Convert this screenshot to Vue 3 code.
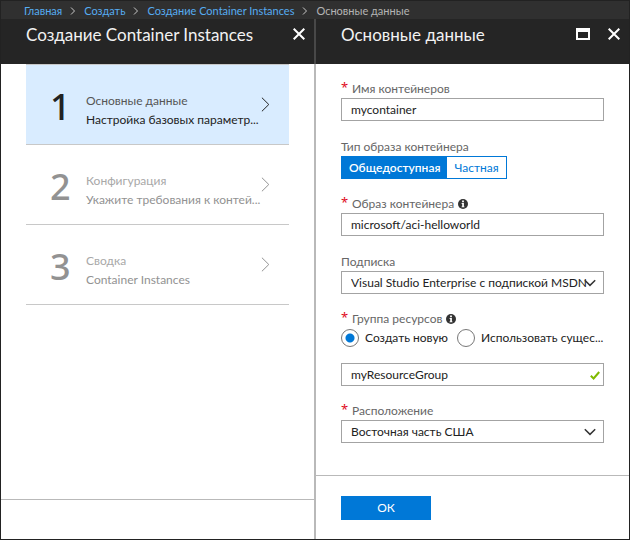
<script setup>
import { ref } from 'vue'

const crumbs = ['Главная', 'Создать', 'Создание Container Instances']
const steps = [
  { title: 'Основные данные', text: 'Настройка базовых параметр...' },
  { title: 'Конфигурация', text: 'Укажите требования к контей...' },
  { title: 'Сводка', text: 'Container Instances' }
]
const currentStep = ref(0)
const imageTypes = ['Общедоступная', 'Частная']
const imageType = ref('Общедоступная')
const name = ref('mycontainer')
const image = ref('microsoft/aci-helloworld')
const groupMode = ref('new')
const group = ref('myResourceGroup')
</script>

<template>
  <div class="portal">
    <nav class="crumbs" aria-label="Путь">
      <template v-for="crumb in crumbs" :key="crumb">
        <a href="#">{{ crumb }}</a>
        <svg class="sep" viewBox="0 0 6 8" aria-hidden="true"><path d="M1 .5 4.5 4 1 7.5" /></svg>
      </template>
      <span>Основные данные</span>
    </nav>

    <main class="blades">
      <section class="blade left">
        <header class="head">
          <h1>Создание Container Instances</h1>
          <button class="tool" type="button" aria-label="Закрыть">
            <svg viewBox="0 0 12 12"><path d="M.7.7 11.3 11.3M11.3.7.7 11.3" /></svg>
          </button>
        </header>
        <ol class="steps">
          <li v-for="(step, i) in steps" :key="step.title">
            <button class="step" :class="{ active: i === currentStep }" type="button" @click="currentStep = i">
              <span class="num">{{ i + 1 }}</span>
              <span class="copy">
                <span class="step-title">{{ step.title }}</span>
                <span class="step-text">{{ step.text }}</span>
              </span>
              <svg class="next" viewBox="0 0 9 15" aria-hidden="true"><path d="M.9.7 7.8 7.5.9 14.3" /></svg>
            </button>
          </li>
        </ol>
        <footer class="foot-empty"></footer>
      </section>

      <section class="blade right">
        <header class="head">
          <h2>Основные данные</h2>
          <button class="tool" type="button" aria-label="Развернуть">
            <svg class="max" viewBox="0 0 14 12"><path class="solid" d="M0 0h14v12H0zM2 4v6h10V4z" /></svg>
          </button>
          <button class="tool" type="button" aria-label="Закрыть">
            <svg viewBox="0 0 12 12"><path d="M.7.7 11.3 11.3M11.3.7.7 11.3" /></svg>
          </button>
        </header>

        <form class="form" @submit.prevent>
          <div class="field">
            <label class="label required" for="name">Имя контейнеров</label>
            <input id="name" v-model="name" class="box" type="text" />
          </div>

          <div class="field">
            <span id="type-label" class="label plain">Тип образа контейнера</span>
            <div class="toggle" role="group" aria-labelledby="type-label">
              <button
                v-for="type in imageTypes"
                :key="type"
                type="button"
                :class="{ on: type === imageType }"
                :aria-pressed="type === imageType"
                @click="imageType = type"
              >{{ type }}</button>
            </div>
          </div>

          <div class="field">
            <label class="label required" for="image">Образ контейнера
              <svg class="info" viewBox="0 0 10 10" aria-hidden="true"><circle cx="5" cy="5" r="5" /><path d="M4.1 1.6h1.8v1.6H4.1zM3.6 4.1h2.3v3.3h.6v.9h-3v-.9h.7V5h-.6z" /></svg>
            </label>
            <input id="image" v-model="image" class="box" type="text" />
          </div>

          <div class="field">
            <label class="label plain" for="subscription">Подписка</label>
            <div class="pick">
              <select id="subscription" class="box">
                <option>Visual Studio Enterprise с подпиской MSDN</option>
              </select>
              <svg class="down" viewBox="0 0 12 8" aria-hidden="true"><path d="M.8 1.2 6 6.4l5.2-5.2" /></svg>
            </div>
          </div>

          <div class="field">
            <label class="label required" for="group">Группа ресурсов
              <svg class="info" viewBox="0 0 10 10" aria-hidden="true"><circle cx="5" cy="5" r="5" /><path d="M4.1 1.6h1.8v1.6H4.1zM3.6 4.1h2.3v3.3h.6v.9h-3v-.9h.7V5h-.6z" /></svg>
            </label>
            <div class="radios">
              <label class="radio"><input v-model="groupMode" type="radio" name="mode" value="new" /><span>Создать новую</span></label>
              <label class="radio"><input v-model="groupMode" type="radio" name="mode" value="existing" /><span>Использовать сущес...</span></label>
            </div>
            <div class="pick">
              <input id="group" v-model="group" class="box" type="text" />
              <svg class="check" viewBox="0 0 10 9" aria-hidden="true"><path d="M.8 4.8 3.6 7.5 9.2 1" /></svg>
            </div>
          </div>

          <div class="field">
            <label class="label required" for="location">Расположение</label>
            <div class="pick">
              <select id="location" class="box">
                <option>Восточная часть США</option>
              </select>
              <svg class="down" viewBox="0 0 12 8" aria-hidden="true"><path d="M.8 1.2 6 6.4l5.2-5.2" /></svg>
            </div>
          </div>
        </form>

        <footer class="foot">
          <button class="ok" type="button">ОК</button>
        </footer>
      </section>
    </main>
  </div>
</template>

<style>
body {
  background: #fff;
}
</style>

<style scoped>
.portal,
.portal * {
  box-sizing: border-box;
}
.portal {
  display: flex;
  flex-direction: column;
  min-height: 100vh;
  border: 1px solid #222;
  font-family: Lato, "Noto Sans", sans-serif;
  font-size: 12px;
  line-height: 18px;
  color: #222;
}
button,
input,
select {
  margin: 0;
  font: inherit;
  color: inherit;
}
button {
  padding: 0;
  border: 0;
  background: none;
}
svg {
  display: block;
  flex: none;
  fill: none;
}
.crumbs {
  display: flex;
  align-items: center;
  height: 18px;
  padding: 2px 0 0 23px;
  gap: 8px;
  background: #303030;
  color: #b4b4b4;
  font-size: 11px;
  line-height: 16px;
  white-space: nowrap;
}
.crumbs a {
  color: #56acf2;
  text-decoration: none;
}
.sep {
  width: 6px;
  height: 8px;
  stroke: #c8c8c8;
}
.blades {
  display: flex;
  flex: 1;
}
.blade {
  display: flex;
  flex: 1;
  flex-direction: column;
  min-width: 0;
}
.left {
  padding-right: 2px;
  background: linear-gradient(#484848 45px, #b9b9b9 45px) right / 2px 100% no-repeat;
}
.head {
  display: flex;
  align-items: flex-start;
  gap: 18px;
  height: 45px;
  padding: 4px 9px 0 25px;
  background: #252525;
  color: #f2f2f2;
}
.head h1,
.head h2 {
  flex: 1;
  margin: 0;
  font-size: 17px;
  font-weight: 400;
  line-height: 24px;
  white-space: nowrap;
}
.tool {
  padding-top: 5px;
}
.tool svg {
  width: 12px;
  height: 12px;
  stroke: #fff;
  stroke-width: 2;
}
.tool .max {
  width: 14px;
}
.tool .solid {
  fill: #fff;
  fill-rule: evenodd;
  stroke: none;
}
.steps {
  flex: 1;
  margin: 0;
  padding: 0 25px;
  list-style: none;
}
.steps li {
  border-bottom: 1px solid #c8c8c8;
}
.steps li:first-child {
  border-top: 1px solid #c8c8c8;
}
.step {
  display: flex;
  align-items: center;
  width: 100%;
  height: 79px;
  padding: 4px 19px 0 24px;
  color: #929292;
  text-align: left;
}
.num {
  width: 36px;
  font-family: "Noto Sans", sans-serif;
  font-size: 36px;
  font-weight: 500;
  line-height: 40px;
}
.copy {
  flex: 1;
  min-width: 0;
  padding-top: 7px;
}
.copy span {
  display: block;
  line-height: 19px;
  white-space: nowrap;
}
.copy .step-title {
  color: #a8a8a8;
}
.active {
  background: #d9ecff;
  color: #222;
}
.active .step-title {
  color: #555;
}
.next {
  width: 9px;
  height: 15px;
  margin-bottom: 4px;
  stroke: currentColor;
}
.foot-empty {
  height: 40px;
  border-top: 1px solid #b9b9b9;
}
.form {
  display: flex;
  flex: 1;
  flex-direction: column;
  gap: 16px;
  padding: 16px 25px;
}
.label {
  display: flex;
  align-items: center;
  gap: 4px;
  height: 18px;
  color: #666;
}
.plain {
  height: 19px;
}
.required::before {
  content: "*";
  width: 7px;
  color: #e00b1c;
  font-family: "Noto Sans", sans-serif;
  font-size: 13px;
  line-height: 14px;
  align-self: flex-start;
}
.info {
  width: 10px;
  height: 10px;
}
.info circle {
  fill: #333;
}
.info path {
  fill: #fff;
}
.box {
  display: block;
  width: 100%;
  height: 23px;
  padding: 0 9px;
  border: 1px solid #a3a3a3;
  border-radius: 0;
  background: #fff;
  appearance: none;
  outline: 0;
}
select.box {
  padding-right: 10px;
}
.toggle {
  display: inline-flex;
  height: 23px;
  border: 1px solid #0078d7;
  vertical-align: top;
}
.toggle button {
  padding: 0 7px;
  color: #0078d7;
}
.toggle .on {
  background: #0078d7;
  color: #fff;
  font-weight: 600;
}
.pick {
  position: relative;
}
.down,
.check {
  position: absolute;
  pointer-events: none;
}
.down {
  top: 8px;
  right: 8px;
  width: 12px;
  height: 8px;
  stroke: #333;
  stroke-width: 1.5;
}
.check {
  top: 8px;
  right: 4px;
  width: 10px;
  height: 9px;
  stroke: #7fba00;
  stroke-width: 2;
}
.radios {
  display: flex;
  gap: 9px;
  height: 20px;
  margin-bottom: 15px;
}
.radio {
  display: flex;
  flex: none;
  align-items: center;
  gap: 6px;
  white-space: nowrap;
}
.radio input {
  flex: none;
  width: 18px;
  height: 18px;
  border: 1px solid #777;
  border-radius: 50%;
  background: #fff;
  appearance: none;
}
.radio input:checked {
  background: radial-gradient(circle, #0078d7 4px, #fff 5px);
}
.foot {
  padding: 20px 25px 19px;
  border-top: 1px solid #b9b9b9;
}
.ok {
  display: block;
  width: 90px;
  height: 24px;
  background: #0078d7;
  color: #fff;
}
</style>
